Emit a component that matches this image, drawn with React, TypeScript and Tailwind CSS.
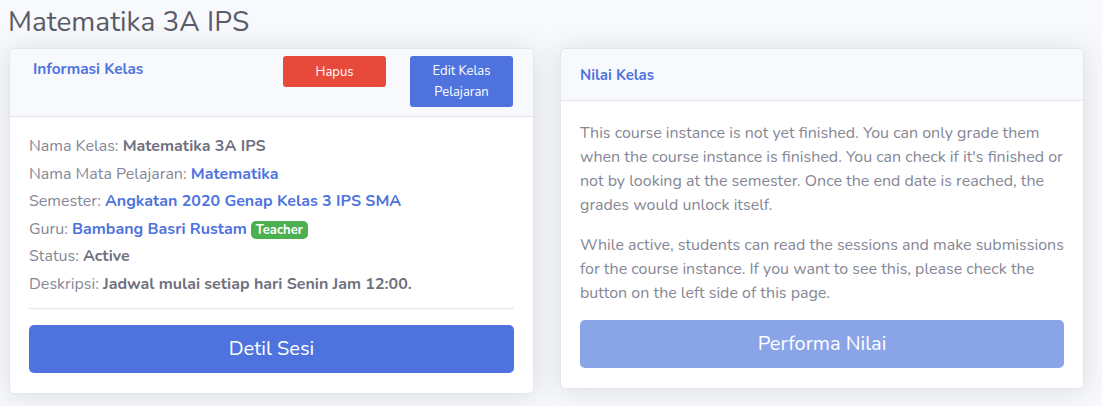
import React from "react";

const font = { fontFamily: '"Nunito", "Open Sans", "Noto Sans", sans-serif' };

export default function App() {
  return (
    <div className="min-h-[406px] w-[1102px] bg-[#f8f9fc] text-[#858796]" style={font}>
      <h1 className="pl-[8px] pt-[5px] text-[28px] leading-[34px] text-[#5a5c69]" style={font}>
        Matematika 3A IPS
      </h1>
      <div className="mt-[9px] flex items-start gap-[26px] pl-[9px]">
        {/* Left card */}
        <div className="w-[525px] rounded-[5px] border border-[#e3e6f0] bg-white shadow-[0_2px_28px_0_rgba(58,59,69,0.15)]">
          <div className="flex h-[68px] items-start rounded-t-[5px] border-b border-[#e3e6f0] bg-[#f8f9fc] pl-[23px] pr-[20px]">
            <div className="mt-[10px] text-[15.4px] font-bold leading-[20px] text-[#4e73df]">Informasi Kelas</div>
            <div className="ml-auto mt-[7px] flex gap-[24px]">
              <button className="h-[31px] w-[103px] rounded-[3px] bg-[#e74a3b] text-[13px] leading-[20px] text-white">
                Hapus
              </button>
              <button className="h-[51px] w-[103px] rounded-[3px] bg-[#4e73df] text-[13px] leading-[21px] text-white">
                Edit Kelas
                <br />
                Pelajaran
              </button>
            </div>
          </div>
          <div className="px-[19px] pb-[20px] pt-[16px] text-[16px] leading-[27.6px]">
            <div>
              Nama Kelas: <b className="text-[#6e707e]">Matematika 3A IPS</b>
            </div>
            <div>
              Nama Mata Pelajaran: <b className="text-[#4e73df]">Matematika</b>
            </div>
            <div>
              Semester: <b className="text-[#4e73df]">Angkatan 2020 Genap Kelas 3 IPS SMA</b>
            </div>
            <div className="flex items-center">
              <span>Guru:&nbsp;</span>
              <b className="text-[#4e73df]">Bambang Basri Rustam</b>
              <span className="ml-[4px] rounded-[5px] bg-[#4caf50] px-[5px] text-[13px] font-bold leading-[18px] text-white">
                Teacher
              </span>
            </div>
            <div>
              Status: <b className="text-[#6e707e]">Active</b>
            </div>
            <div>
              Deskripsi: <b className="text-[#6e707e]">Jadwal mulai setiap hari Senin Jam 12:00.</b>
            </div>
            <hr className="mt-[9px] border-t border-[#e3e6f0]" />
            <button className="mt-[16px] h-[48px] w-full rounded-[5px] bg-[#4e73df] text-[20px] text-white">
              Detil Sesi
            </button>
          </div>
        </div>

        {/* Right card */}
        <div className="w-[524px] rounded-[5px] border border-[#e3e6f0] bg-white shadow-[0_2px_28px_0_rgba(58,59,69,0.15)]">
          <div className="flex h-[52px] items-center rounded-t-[5px] border-b border-[#e3e6f0] bg-[#f8f9fc] px-[19px]">
            <div className="text-[15px] font-bold leading-[20px] text-[#4e73df]">Nilai Kelas</div>
          </div>
          <div className="px-[19px] pb-[20px] pt-[20px] text-[16px] leading-[24px]">
            <p>
              This course instance is not yet finished. You can only grade them when the course instance is finished.
              You can check if it's finished or not by looking at the semester. Once the end date is reached, the
              grades would unlock itself.
            </p>
            <p className="mt-[16px]">
              While active, students can read the sessions and make submissions for the course instance. If you want to
              see this, please check the button on the left side of this page.
            </p>
            <button className="mt-[15px] h-[48px] w-full rounded-[5px] bg-[#8aa4e8] text-[20px] text-white">
              Performa Nilai
            </button>
          </div>
        </div>
      </div>
    </div>
  );
}
